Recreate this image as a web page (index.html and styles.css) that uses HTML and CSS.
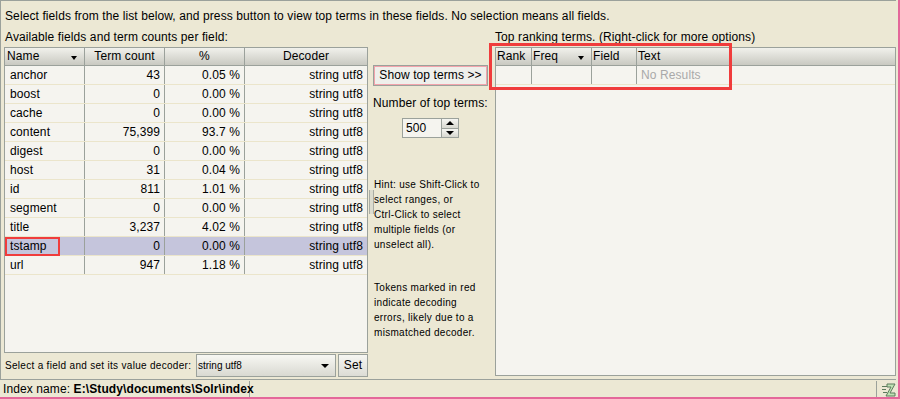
FILE: index.html
```html
<!DOCTYPE html>
<html lang="en">
<head>
    <meta charset="UTF-8">
    <meta name="viewport" content="width=device-width, initial-scale=1.0">
    <title>Overview - fields</title>
    <link rel="stylesheet" href="styles.css">
</head>
<body>
    <div class="window">
        <div class="panel">
            <p class="intro">Select fields from the list below, and press button to view top terms in these fields. No selection means all fields.</p>

            <div class="columns">
                <!-- fields list -->
                <div class="fields-col">
                    <div class="label">Available fields and term counts per field:</div>
                    <div class="grid fields">
                        <div class="head">
                            <div class="hcell sort">Name<span class="arrow"></span></div>
                            <div class="hcell center">Term count</div>
                            <div class="hcell center">%</div>
                            <div class="hcell center">Decoder</div>
                        </div>
                        <div class="row"><div class="cell">anchor</div><div class="cell num">43</div><div class="cell num">0.05 %</div><div class="cell num">string utf8</div></div>
                        <div class="row"><div class="cell">boost</div><div class="cell num">0</div><div class="cell num">0.00 %</div><div class="cell num">string utf8</div></div>
                        <div class="row"><div class="cell">cache</div><div class="cell num">0</div><div class="cell num">0.00 %</div><div class="cell num">string utf8</div></div>
                        <div class="row"><div class="cell">content</div><div class="cell num">75,399</div><div class="cell num">93.7 %</div><div class="cell num">string utf8</div></div>
                        <div class="row"><div class="cell">digest</div><div class="cell num">0</div><div class="cell num">0.00 %</div><div class="cell num">string utf8</div></div>
                        <div class="row"><div class="cell">host</div><div class="cell num">31</div><div class="cell num">0.04 %</div><div class="cell num">string utf8</div></div>
                        <div class="row"><div class="cell">id</div><div class="cell num">811</div><div class="cell num">1.01 %</div><div class="cell num">string utf8</div></div>
                        <div class="row"><div class="cell">segment</div><div class="cell num">0</div><div class="cell num">0.00 %</div><div class="cell num">string utf8</div></div>
                        <div class="row"><div class="cell">title</div><div class="cell num">3,237</div><div class="cell num">4.02 %</div><div class="cell num">string utf8</div></div>
                        <div class="row selected"><div class="cell">tstamp</div><div class="cell num">0</div><div class="cell num">0.00 %</div><div class="cell num">string utf8</div></div>
                        <div class="row"><div class="cell">url</div><div class="cell num">947</div><div class="cell num">1.18 %</div><div class="cell num">string utf8</div></div>
                    </div>
                    <div class="decoder-row">
                        <span class="small">Select a field and set its value decoder:</span>
                        <div class="combo"><span class="small">string utf8</span><span class="arrow"></span></div>
                        <div class="btn set">Set</div>
                    </div>
                </div>

                <!-- controls -->
                <div class="middle-col">
                    <div class="btn show">Show top terms &gt;&gt;</div>
                    <div class="num-label">Number of top terms:</div>
                    <div class="spinner">
                        <div class="spin-value">500</div>
                        <div class="spin-btns">
                            <span class="spin-up"></span>
                            <span class="spin-down"></span>
                        </div>
                    </div>
                    <p class="hint small">Hint: use Shift-Click to<br>select ranges, or<br>Ctrl-Click to select<br>multiple fields (or<br>unselect all).</p>
                    <p class="hint tokens small">Tokens marked in red<br>indicate decoding<br>errors, likely due to a<br>mismatched decoder.</p>
                </div>

                <!-- top terms -->
                <div class="terms-col">
                    <div class="label terms-label">Top ranking terms. (Right-click for more options)</div>
                    <div class="grid terms">
                        <div class="head">
                            <div class="hcell">Rank</div>
                            <div class="hcell sort">Freq<span class="arrow"></span></div>
                            <div class="hcell">Field</div>
                            <div class="hcell">Text</div>
                        </div>
                        <div class="row">
                            <div class="cell"></div>
                            <div class="cell"></div>
                            <div class="cell"></div>
                            <div class="cell empty">No Results</div>
                        </div>
                    </div>
                </div>
            </div>
        </div>

        <div class="status">
            <div class="index-name">Index name: <b>E:\Study\documents\Solr\index</b></div>
            <div class="status-fill"></div>
            <div class="status-icon">
                <svg width="16" height="15" viewBox="0 0 16 15">
                    <path d="M1 4.5h5M1 7.5h4M2 10.5h4" stroke="#5c7a5c" stroke-width="1.2" fill="none"/>
                    <path d="M6 2h8l-5 9h5v3H5l5-9H6z" fill="#bfe3b4" stroke="#5c7a5c" stroke-width="1"/>
                </svg>
            </div>
        </div>
    </div>

    <div class="mark mark-field"></div>
    <div class="mark mark-terms"></div>
</body>
</html>
```

FILE: styles.css
```css
:root {
    --bg: #ece8d4;
    --table-bg: #f5f4ef;
    --line: #9ba19b;
    --row-line: #ebe5cb;
    --selected: #c5c5dc;
    --pink: #e4679a;
    --mark: #f03c3c;
}

* {
    box-sizing: border-box;
}

body {
    margin: 0;
    background: var(--bg);
    color: #000;
    font-family: 'Liberation Sans', Arial, sans-serif;
    font-size: 12px;
    letter-spacing: 0.1px;
    overflow: hidden;
    position: relative;
}

.small {
    font-size: 10px;
    letter-spacing: 0.3px;
}

/* frame */
.window {
    width: 900px;
    height: 399px;
    border-right: 2px solid var(--pink);
    border-bottom: 2px solid var(--pink);
    display: flex;
    flex-direction: column;
}

.panel {
    width: 896px;
    height: 380px;
    border: 1px solid var(--line);
    border-right: none;
    padding: 7px 0 0 3px;
}

.intro {
    margin: 0 0 0 1px;
    line-height: 16px;
    white-space: nowrap;
}

.columns {
    display: flex;
    margin-top: 5px;
}

.label {
    line-height: 16px;
    margin: 0 0 2px 1px;
    white-space: nowrap;
}

/* tables */
.grid {
    background: var(--table-bg);
    border: 1px solid var(--line);
}

.head,
.row {
    display: grid;
}

.head {
    height: 18px;
    background: linear-gradient(#f1f1ec, #c9c9c1);
    border-bottom: 1px solid var(--line);
}

.hcell {
    line-height: 17px;
    padding-left: 2px;
    border-right: 1px solid var(--line);
    white-space: nowrap;
    position: relative;
}

.hcell:last-child,
.cell:last-child {
    border-right: none;
}

.hcell.center {
    text-align: center;
    padding-left: 0;
}

.sort .arrow {
    position: absolute;
    right: 7px;
    top: 8px;
    border-left: 3.5px solid transparent;
    border-right: 3.5px solid transparent;
    border-top: 4px solid #000;
}

.row {
    height: 19px;
    border-bottom: 1px solid var(--row-line);
}

.row.selected {
    background: var(--selected);
}

.cell {
    line-height: 18px;
    padding: 0 4px 0 5px;
    border-right: 1px solid var(--line);
    white-space: nowrap;
}

.cell.num {
    text-align: right;
}

.fields-col {
    width: 364px;
    display: flex;
    flex-direction: column;
}

.fields {
    height: 306px;
}

.fields .head,
.fields .row {
    grid-template-columns: 80px 80px 80px 122px;
}

.decoder-row {
    display: flex;
    align-items: center;
    height: 23px;
    margin-top: 1px;
    padding-left: 1px;
}

.combo {
    width: 140px;
    height: 23px;
    margin-left: auto;
    border: 1px solid var(--line);
    background: linear-gradient(#f7f7f3, #d9d9d1);
    display: flex;
    align-items: center;
    padding: 0 6px 0 1px;
    letter-spacing: 0;
}

.combo .small {
    letter-spacing: 0;
}

.combo .arrow {
    margin-left: auto;
    border-left: 4px solid transparent;
    border-right: 4px solid transparent;
    border-top: 4px solid #000;
}

.btn {
    border: 1px solid var(--line);
    background: linear-gradient(#f6f6f2, #dcdcd5);
    text-align: center;
    white-space: nowrap;
}

.set {
    width: 30px;
    height: 23px;
    margin-left: 2px;
    line-height: 21px;
}

/* middle controls */
.middle-col {
    width: 127px;
    padding-left: 5px;
    position: relative;
}

.middle-col::before {
    content: '';
    position: absolute;
    left: 1px;
    top: 161px;
    width: 3px;
    height: 24px;
    border-left: 1px solid #a9aca4;
    border-right: 1px solid #a9aca4;
    background: #dcdccf;
}

.show {
    margin-top: 36px;
    width: 115px;
    height: 21px;
    line-height: 19px;
    background: #efefeb;
    box-shadow: inset 0 0 0 1px #f2a3ab;
}

.num-label {
    margin-top: 9px;
    line-height: 16px;
    white-space: nowrap;
}

.spinner {
    display: flex;
    height: 20px;
    margin: 7px 0 0 29px;
}

.spin-value {
    width: 40px;
    border: 1px solid var(--line);
    background: var(--table-bg);
    padding-left: 3px;
    line-height: 18px;
}

.spin-btns {
    width: 17px;
    display: flex;
    flex-direction: column;
    border: 1px solid var(--line);
    border-left: none;
}

.spin-btns span {
    flex: 1;
    display: flex;
    justify-content: center;
    align-items: center;
    background: linear-gradient(#f6f6f2, #d8d8d0);
}

.spin-up {
    border-bottom: 1px solid var(--line);
}

.spin-up::after,
.spin-down::after {
    content: '';
    border-left: 4px solid transparent;
    border-right: 4px solid transparent;
}

.spin-up::after {
    border-bottom: 4px solid #000;
}

.spin-down::after {
    border-top: 4px solid #000;
}

.hint {
    margin: 39px 0 0 1px;
    line-height: 15px;
    white-space: nowrap;
}

.hint.tokens {
    margin-top: 28px;
}

/* top terms */
.terms-col {
    width: 401px;
}

.terms-label {
    margin-left: 0;
}

.terms {
    height: 329px;
}

.terms .head,
.terms .row {
    grid-template-columns: 36px 60px 45px 258px;
}

.terms .hcell {
    padding-left: 1px;
}

.cell.empty {
    color: #a9a9a9;
    padding-left: 4px;
}

/* status bar */
.status {
    height: 17px;
    display: flex;
}

.index-name {
    width: 250px;
    padding-left: 3px;
    line-height: 17px;
    border-right: 1px solid var(--line);
    margin-top: 1px;
    white-space: nowrap;
}

.status-fill {
    flex: 1;
}

.status-icon {
    width: 22px;
    border-left: 1px solid var(--line);
    margin-top: 1px;
    padding: 1px 0 0 4px;
}

/* annotation boxes */
.mark {
    position: absolute;
    border: 2px solid var(--mark);
    pointer-events: none;
}

.mark-field {
    left: 5px;
    top: 237px;
    width: 55px;
    height: 19px;
}

.mark-terms {
    left: 489px;
    top: 43px;
    width: 243px;
    height: 47px;
    border-width: 3px;
}
```
